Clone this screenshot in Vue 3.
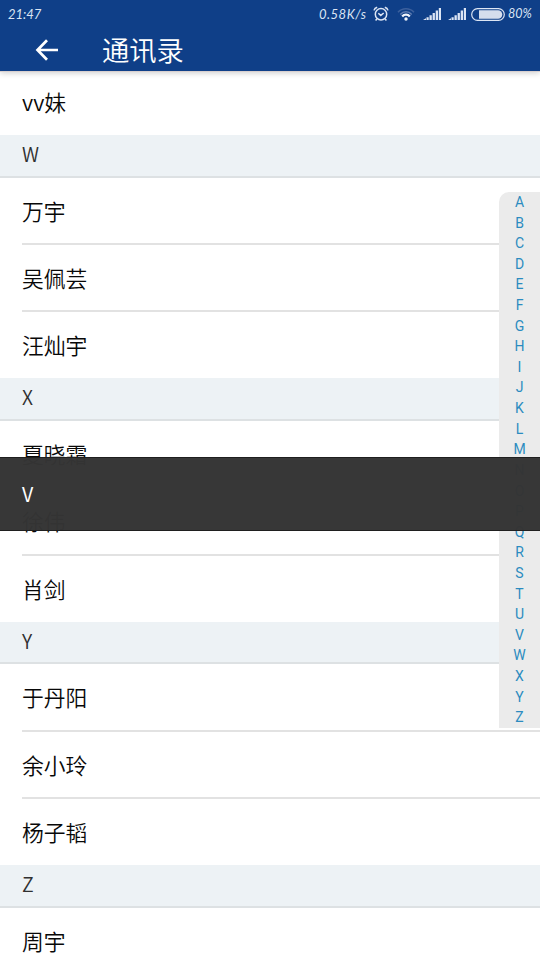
<script setup>
const groups = [
  { letter: 'W', names: ['万宇', '吴佩芸', '汪灿宇'] },
  { letter: 'X', names: ['夏晓霜', '徐伟', '肖剑'] },
  { letter: 'Y', names: ['于丹阳', '余小玲', '杨子韬'] },
  { letter: 'Z', names: ['周宇'] },
]
const alphabet = 'ABCDEFGHIJKLMNOPQRSTUVWXYZ'.split('')
</script>

<template>
  <div class="screen">
    <header class="top">
      <div class="status">
        <span class="time">21:47</span>
        <span class="speed">0.58K/s</span>
        <svg class="alarm" width="16" height="16" viewBox="0 0 16 16" fill="none" stroke="#dce5f4" stroke-width="1.500">
          <circle cx="8" cy="8.3" r="5.7" />
          <path d="M1 4.4C1.4 2.8 2.5 1.8 4.2 1.3M15 4.4C14.6 2.8 13.500 1.800 11.800 1.300M5.300 7.200l2.500 2.200 2.900-2.400M4 12.800l-1.400 1.700M12 12.800l1.400 1.700" />
        </svg>
        <svg class="wifi" width="18" height="14" viewBox="0 0 18 14" fill="none" stroke-width="1.500">
          <path d="M1 5.200C5.400.5 12.600.5 17 5.200" stroke="#3c609d" />
          <path d="M3.300 7.400c3-3.400 8.400-3.400 11.400 0" stroke="#5f7db1" />
          <path d="M5.200 9.500c2-2.500 5.600-2.500 7.600 0" stroke="#f0f4fb" stroke-width="2.200" />
          <circle cx="9" cy="12" r="1.700" fill="#f0f4fb" />
        </svg>
        <svg v-for="n in 2" :key="n" class="signal" width="18" height="12" viewBox="0 0 18 12" fill="#dce5f4">
          <path d="M0 12l3-1.800V12zM3.500 9.300h2.200V12H3.500zM6.500 7.300h2.300V12H6.500zM9.600 5h2.300v7H9.600zM12.700 2.500H15V12h-2.300zM15.800 0H18v12h-2.200z" />
        </svg>
        <svg class="battery" width="34" height="13" viewBox="0 0 34 13">
          <rect x=".7" y=".7" width="32.600" height="11.600" rx="5.800" fill="none" stroke="#dce5f4" stroke-width="1.200" />
          <path d="M8 2.200h19a4.300 4.300 0 0 1 0 8.600H8z" fill="#d5deed" />
        </svg>
        <span class="percent">80%</span>
      </div>
      <div class="toolbar">
        <svg width="24" height="22" viewBox="0 0 24 22" fill="none" stroke="#fff" stroke-width="2.700">
          <path d="M12 1.200L2.500 11 12 20.800M2.500 11H23" />
        </svg>
        <h1>通讯录</h1>
      </div>
    </header>

    <main class="list">
      <div class="row first">vv妹</div>
      <section v-for="g in groups" :key="g.letter">
        <div class="heading">{{ g.letter }}</div>
        <div v-for="name in g.names" :key="name" class="row">{{ name }}</div>
      </section>
    </main>

    <nav class="index">
      <span v-for="l in alphabet" :key="l">{{ l }}</span>
    </nav>
    <div class="toast">V</div>
  </div>
</template>

<style>
body { margin: 0; background: #fff; }
</style>

<style scoped>
.screen {
  position: relative;
  width: 540px;
  height: 960px;
  overflow: hidden;
  background: #fff;
  font-family: "Noto Sans CJK SC", sans-serif;
}
.top {
  position: relative;
  height: 71px;
  background: #0f3f88;
  box-shadow: 0 1px 0 #d9d0cf, 0 2px 6px rgba(0, 0, 0, .2);
}
.status {
  display: flex;
  align-items: center;
  height: 28px;
  padding: 0 8px;
  color: #dce5f4;
  font: italic 13px/28px Lato, sans-serif;
  white-space: nowrap;
}
.time { flex: 1; }
.speed { width: 54px; letter-spacing: .5px; }
.wifi { margin-left: 8px; }
.signal { margin-left: 7px; }
.wifi + .signal { margin-left: 8px; }
.battery { margin: 0 3px 0 5px; }
.percent { width: 24px; font-size: 12.500px; }
.toolbar {
  display: flex;
  align-items: center;
  height: 43px;
  padding-left: 35px;
}
h1 {
  margin: 0 0 0 43px;
  color: #fff;
  font: 350 27.300px/45px "Noto Sans CJK SC", sans-serif;
}
.row {
  box-sizing: border-box;
  height: 67.400px;
  margin-left: 22px;
  border-bottom: 2px solid #e2e2e2;
  color: #080808;
  font: 350 21.800px/65px "Noto Sans CJK SC", sans-serif;
}
.row:last-child, .row.first { border-bottom: 0; }
.row:last-child { height: 65.900px; }
.row.first { height: 64px; line-height: 61px; }
.heading {
  box-sizing: border-box;
  height: 42.700px;
  padding-left: 22px;
  border-bottom: 2px solid #dde1e3;
  background: #edf2f5;
  color: #303030;
  font: 350 19.500px/37px "Noto Sans CJK SC", sans-serif;
}
.index {
  position: absolute;
  top: 192px;
  right: 0;
  display: grid;
  grid-auto-rows: 20.620px;
  width: 41px;
  border-radius: 10px 0 0 0;
  background: #ebebeb;
  color: #2b8bc0;
  text-align: center;
  font: 14px/20px Roboto, sans-serif;
}
.toast {
  position: absolute;
  top: 457px;
  left: 0;
  box-sizing: border-box;
  width: 540px;
  height: 74px;
  padding-left: 22px;
  border: solid #1f1f1f;
  border-width: 1px 0;
  background: rgba(52, 52, 52, .985);
  color: #fff;
  font: 19.500px/71px "Noto Sans CJK SC", sans-serif;
}
</style>
